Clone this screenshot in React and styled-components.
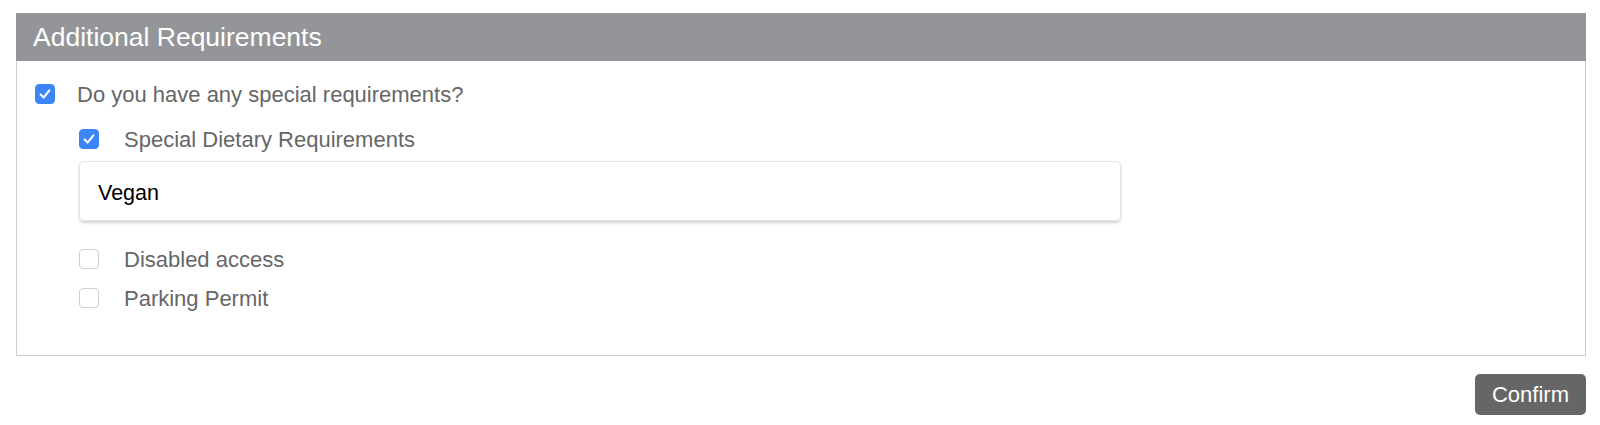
import React from "react";
import styled, { createGlobalStyle } from "styled-components";

const Global = createGlobalStyle`
  html, body { margin: 0; padding: 0; background: #fff; }
  body { font-family: "Liberation Sans", Arial, Helvetica, sans-serif; }
`;

const Page = styled.div`
  padding: 13px 14px 12px 16px;
  display: flex;
  flex-direction: column;
`;

const Panel = styled.section`
  display: flex;
  flex-direction: column;
`;

const PanelHeader = styled.div`
  height: 48px;
  background: #949598;
  color: #fff;
  font-size: 26.5px;
  display: flex;
  align-items: center;
  padding-left: 17px;
  box-sizing: border-box;
`;

const PanelBody = styled.div`
  border: 1px solid #cccccc;
  border-top: none;
  padding: 17px 18px 41px 18px;
  display: flex;
  flex-direction: column;
`;

const Row = styled.label`
  display: flex;
  align-items: center;
  height: 32px;
  margin-top: ${(p) => p.$mt || 0}px;
  color: #666666;
  font-size: 22px;
  cursor: pointer;
`;

const Box = styled.span`
  width: 20px;
  height: 20px;
  box-sizing: border-box;
  border-radius: 4px;
  flex: none;
  display: flex;
  align-items: center;
  justify-content: center;
  background: ${(p) => (p.$checked ? "#3d84f7" : "#fff")};
  border: 1px solid ${(p) => (p.$checked ? "#3d84f7" : "#cfcfcf")};
`;

const LabelText = styled.span`
  margin-left: ${(p) => p.$gap}px;
  padding-top: 1px;
`;

const Nested = styled.div`
  padding-left: 44px;
  display: flex;
  flex-direction: column;
`;

const TextInput = styled.div`
  margin-top: 6px;
  width: 1042px;
  height: 60px;
  box-sizing: border-box;
  border: 1px solid #e4e4e4;
  border-radius: 5px;
  box-shadow: 0 2px 3px rgba(0, 0, 0, 0.18);
  display: flex;
  align-items: center;
  padding-left: 18px;
  padding-top: 5px;
  font-size: 21.5px;
  color: #000;
`;

const Footer = styled.div`
  display: flex;
  justify-content: flex-end;
  margin-top: 18px;
`;

const Button = styled.button`
  width: 111px;
  height: 41px;
  border: none;
  border-radius: 5px;
  background: #666666;
  color: #fff;
  font-family: inherit;
  font-size: 22px;
  padding: 0;
  cursor: pointer;
`;

function Check({ checked }) {
  return (
    <Box $checked={checked}>
      {checked && (
        <svg width="14" height="14" viewBox="0 0 14 14">
          <path d="M2.6 7.6 L5.6 10.6 L11.4 3.4" fill="none" stroke="#fff" strokeWidth="2.1" strokeLinecap="round" strokeLinejoin="round" />
        </svg>
      )}
    </Box>
  );
}

function Option({ checked, gap, mt, children }) {
  return (
    <Row $mt={mt}>
      <Check checked={checked} />
      <LabelText $gap={gap}>{children}</LabelText>
    </Row>
  );
}

export default function App() {
  return (
    <>
      <Global />
      <Page>
        <Panel>
          <PanelHeader>Additional Requirements</PanelHeader>
          <PanelBody>
            <Option checked gap={22}>Do you have any special requirements?</Option>
            <Nested>
              <Option checked gap={25} mt={13}>Special Dietary Requirements</Option>
              <TextInput>Vegan</TextInput>
              <Option gap={25} mt={22}>Disabled access</Option>
              <Option gap={25} mt={7}>Parking Permit</Option>
            </Nested>
          </PanelBody>
        </Panel>
        <Footer>
          <Button>Confirm</Button>
        </Footer>
      </Page>
    </>
  );
}
